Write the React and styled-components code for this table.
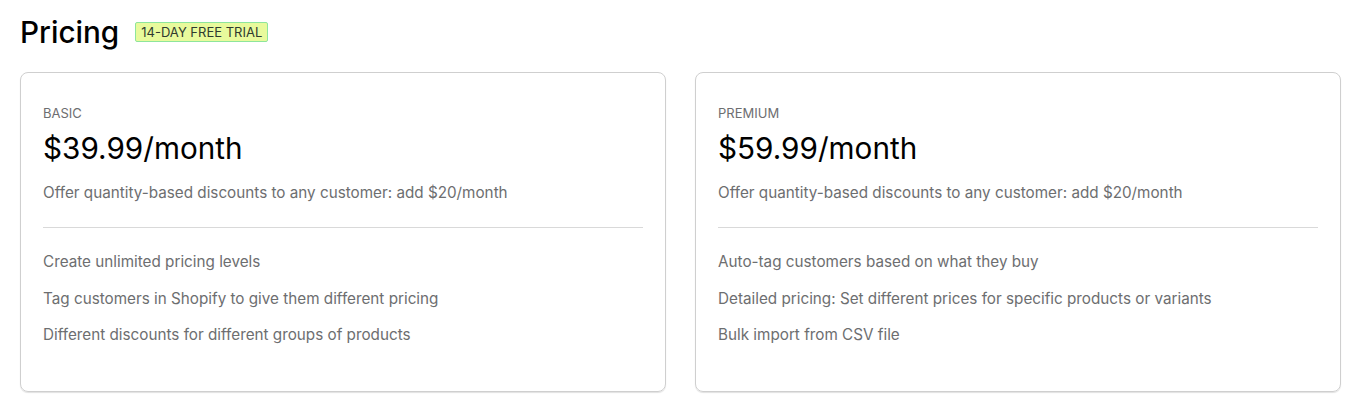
import React from 'react';
import styled, { createGlobalStyle } from 'styled-components';

const GlobalStyle = createGlobalStyle`
  body {
    margin: 0;
    background: #fff;
    font-family: Inter, "Noto Sans", sans-serif;
    color: #111;
  }
`;

const Page = styled.div`
  padding: 12px 19px 16px 20px;
`;

const TitleRow = styled.div`
  display: flex;
  align-items: center;
  gap: 16px;
  margin-bottom: 20px;
`;

const Title = styled.h1`
  margin: 0;
  font-size: 29.7px;
  font-weight: 500;
  line-height: 40px;
  color: #000;
`;

const Badge = styled.span`
  background: #e8fa9c;
  border: 1px solid #8ee59c;
  border-radius: 2px;
  color: #2f3a2f;
  font-size: 13px;
  line-height: 18px;
  padding: 0 5px;
`;

const Grid = styled.div`
  display: grid;
  grid-template-columns: 1fr 1fr;
  gap: 29px;
`;

const Card = styled.div`
  border: 1px solid #cfcfcf;
  border-radius: 8px;
  box-shadow: 0 1px 1px rgba(0, 0, 0, 0.12);
  padding: 32px 22px 46px;
`;

const Tier = styled.div`
  font-size: 13px;
  line-height: 16px;
  color: #6d6e70;
  text-transform: uppercase;
`;

const Price = styled.div`
  font-size: 29.7px;
  line-height: 40px;
  margin-top: 7px;
  color: #000;
`;

const Note = styled.div`
  font-size: 15.25px;
  line-height: 20px;
  color: #6d6e70;
  margin-top: 15px;
`;

const Divider = styled.hr`
  border: none;
  border-top: 1px solid #d9d9d9;
  margin: 24px 0 24px;
`;

const Features = styled.ul`
  list-style: none;
  margin: 0;
  padding: 0;
  display: flex;
  flex-direction: column;
  gap: 16.5px;
`;

const Feature = styled.li`
  font-size: 15.25px;
  line-height: 20px;
  color: #6d6e70;
`;

const plans = [
  {
    tier: 'Basic',
    price: '$39.99/month',
    features: [
      'Create unlimited pricing levels',
      'Tag customers in Shopify to give them different pricing',
      'Different discounts for different groups of products',
    ],
  },
  {
    tier: 'Premium',
    price: '$59.99/month',
    features: [
      'Auto-tag customers based on what they buy',
      'Detailed pricing: Set different prices for specific products or variants',
      'Bulk import from CSV file',
    ],
  },
];

export default function App() {
  return (
    <Page>
      <GlobalStyle />
      <TitleRow>
        <Title>Pricing</Title>
        <Badge>14-DAY FREE TRIAL</Badge>
      </TitleRow>
      <Grid>
        {plans.map((plan) => (
          <Card key={plan.tier}>
            <Tier>{plan.tier}</Tier>
            <Price>{plan.price}</Price>
            <Note>Offer quantity-based discounts to any customer: add $20/month</Note>
            <Divider />
            <Features>
              {plan.features.map((f) => (
                <Feature key={f}>{f}</Feature>
              ))}
            </Features>
          </Card>
        ))}
      </Grid>
    </Page>
  );
}
